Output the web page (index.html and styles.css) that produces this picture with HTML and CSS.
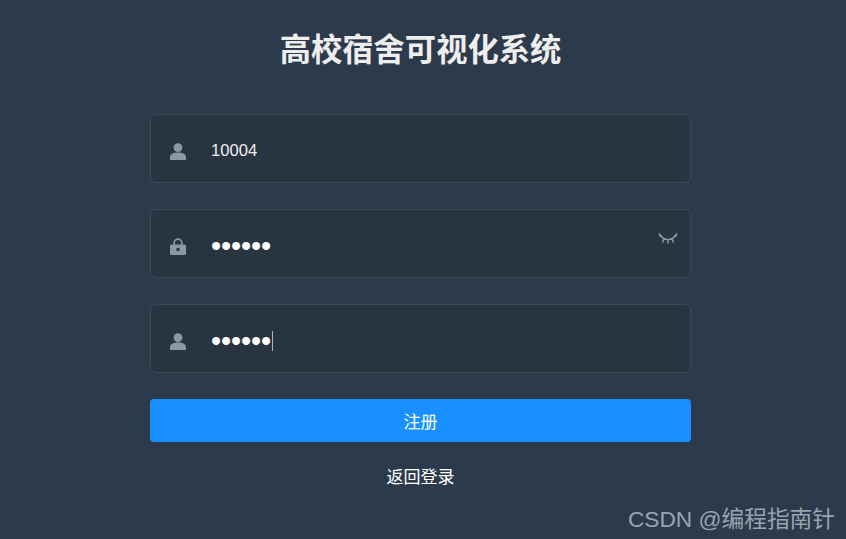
FILE: index.html
```html
<!DOCTYPE html>
<html lang="en">
<head>
    <meta charset="UTF-8">
    <meta name="viewport" content="width=device-width, initial-scale=1.0">
    <title>高校宿舍可视化系统</title>
    <link rel="stylesheet" href="styles.css">
</head>
<body>
    <div class="login-form">
        <h1 class="title">高校宿舍可视化系统</h1>

        <!-- Account -->
        <div class="field">
            <svg class="field-icon" viewBox="0 0 16 17"><circle cx="8" cy="4.600" r="4.400"/><path d="M0 17v-2.600C0 11.300 3 9.600 8 9.600s8 1.700 8 4.800V17z"/></svg>
            <span class="field-value">10004</span>
        </div>

        <!-- Password -->
        <div class="field">
            <svg class="field-icon" viewBox="0 0 16 17"><path d="M1.500 6.500h1.800V5a4.700 4.700 0 0 1 9.400 0v1.500h1.800A1.500 1.500 0 0 1 16 8v7.500a1.500 1.500 0 0 1-1.500 1.500h-13A1.500 1.500 0 0 1 0 15.500V8a1.500 1.500 0 0 1 1.500-1.500zM5 6.500h6V5a3 3 0 0 0-6 0z" fill-rule="evenodd"/><circle class="keyhole" cx="8" cy="11.500" r="1.700"/></svg>
            <span class="field-value dots">••••••</span>
            <svg class="eye" viewBox="0 0 20 12"><path d="M1 1.500C4 5 7 6.500 10 6.500S16 5 19 1.500M1 .5l3 3.500M19 .5l-3 3.500M6 5.500l-1.500 4M14 5.500l1.500 4M10 6.500v4"/></svg>
        </div>

        <!-- Confirm password -->
        <div class="field">
            <svg class="field-icon" viewBox="0 0 16 17"><circle cx="8" cy="4.600" r="4.400"/><path d="M0 17v-2.600C0 11.300 3 9.600 8 9.600s8 1.700 8 4.800V17z"/></svg>
            <span class="field-value dots">••••••</span><span class="caret"></span>
        </div>

        <button class="submit">注册</button>
        <a class="back-link">返回登录</a>
    </div>

    <div class="watermark">CSDN @编程指南针</div>
</body>
</html>
```

FILE: styles.css
```css
html, body {
    height: 100%;
}
body {
    margin: 0;
    overflow: hidden;
    background-color: #2d3a4b;
    font-family: "Liberation Sans", "Noto Sans CJK SC", sans-serif;
    color: #eee;
}
.login-form {
    width: 541px;
    margin-left: 150px;
    padding-top: 29px;
    display: flex;
    flex-direction: column;
}
.title {
    margin: 0 0 41px;
    font-size: 31.3px;
    line-height: 44px;
    font-weight: bold;
    text-align: center;
    color: #eee;
}
.field {
    position: relative;
    box-sizing: border-box;
    height: 69px;
    margin-bottom: 26px;
    padding: 5px 0 0 19px;
    display: flex;
    align-items: center;
    background-color: #293441;
    border: 1px solid rgba(255, 255, 255, 0.1);
    border-radius: 6px;
}
.field-icon {
    width: 16px;
    height: 17px;
    margin-right: 25px;
    fill: #889aa4;
    flex-shrink: 0;
}
.keyhole {
    fill: #293441;
}
.field-value {
    font-size: 16.6px;
    line-height: 24px;
    color: #eee;
}
.dots {
    font-size: 29px;
    line-height: 24px;
    letter-spacing: -0.15px;
    color: #fff;
}
.caret {
    width: 1px;
    height: 20px;
    margin-left: 1px;
    background-color: #aab4bf;
}
.eye {
    position: absolute;
    top: 23px;
    right: 12px;
    width: 20px;
    height: 12px;
    fill: none;
    stroke: #889aa4;
    stroke-width: 1.5;
}
.submit {
    height: 43px;
    padding: 0;
    border: none;
    border-radius: 4px;
    background-color: #1890ff;
    color: #fff;
    font-family: inherit;
    font-size: 17px;
}
.back-link {
    margin-top: 24px;
    font-size: 17px;
    line-height: 24px;
    text-align: center;
    color: #fff;
}
.watermark {
    position: absolute;
    right: 11px;
    bottom: 6px;
    font-size: 22.7px;
    line-height: 28px;
    color: #98a4b0;
}
```
